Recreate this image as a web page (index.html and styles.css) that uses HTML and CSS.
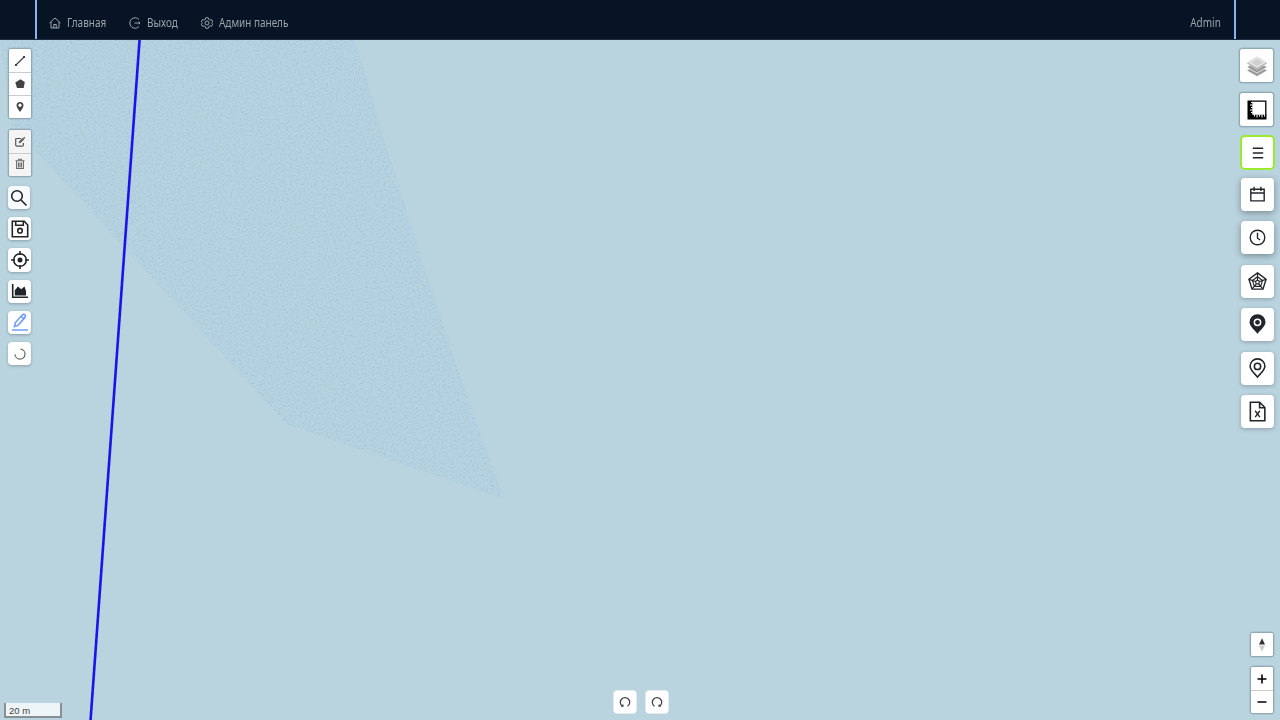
FILE: index.html
```html
<!DOCTYPE html>
<html lang="ru">
<head>
<meta charset="utf-8">
<title>Карта</title>
<link rel="stylesheet" href="styles.css">
</head>
<body>
<header class="header">
  <nav class="nav">
    <a class="nav-item home"><svg width="12" height="12" viewBox="0 0 24 24"><path d="M1 12 12 2l11 10M4 10v12h16V10M9.500 22v-7h5v7"/></svg><span class="label">Главная</span></a>
    <a class="nav-item exit"><svg width="12" height="12" viewBox="0 0 24 24"><path d="M20 5a10.500 10.500 0 1 0 0 14M11 12h11M19.500 9.500 22 12l-2.500 2.500"/></svg><span class="label">Выход</span></a>
    <a class="nav-item admin"><svg width="12" height="12" viewBox="0 0 24 24"><path d="M9.500 1.500h5l1 3.300 2.400 1.400 3.300-.8 2.300 4.300-2.400 2.300 2.400 2.300-2.300 4.300-3.300-.8-2.400 1.400-1 3.300h-5l-1-3.300-2.400-1.400-3.300.8L.5 14.300 2.900 12 .5 9.700l2.300-4.300 3.300.8 2.400-1.400z"/><circle cx="12" cy="12" r="4"/></svg><span class="label">Админ панель</span></a>
    <span class="user">Admin</span>
  </nav>
</header>
<main class="map">
  <svg class="map-canvas" width="1280" height="680" viewBox="0 40 1280 680">
    <defs>
      <filter id="grain" x="0" y="0" width="100%" height="100%" color-interpolation-filters="sRGB">
        <feTurbulence type="fractalNoise" baseFrequency=".52" numOctaves="2" seed="4"/>
        <feColorMatrix values="0 0 0 0 .62  0 0 0 0 .76  0 0 0 0 .86  2.400 0 0 0 -1.08"/>
        <feComposite in2="SourceGraphic" operator="in"/>
      </filter>
    </defs>
    <path d="M0 40 12 125 286 424 504 499Q421 270 355 40Z" fill="#b7d3df"/>
    <path d="M0 40 12 125 286 424 504 499Q421 270 355 40Z" filter="url(#grain)" opacity=".8"/>
    <path d="M139.700 38 90.500 721" stroke="#1c12ee" stroke-width="2.600"/>
  </svg>

  <div class="left-tools">
    <div class="bar draw">
      <button><svg width="12" height="12" viewBox="0 0 12 12"><path d="M2 10 10 2" stroke="#444" stroke-width="1.200"/><path d="M1 9h2v2H1zM9 1h2v2H9z" fill="#444"/></svg></button>
      <button><svg width="12" height="12" viewBox="0 0 12 12"><path d="m6.400 1.200 4.400 2.900-1.100 6H3L1.300 4.500z" fill="#444"/></svg></button>
      <button><svg width="12" height="12" viewBox="0 0 12 12"><path fill-rule="evenodd" d="M6 11C4.800 8.900 2.500 6.500 2.500 4.500a3.500 3.500 0 0 1 7 0C9.500 6.500 7.200 8.900 6 11zM6 2.600a1.700 1.700 0 1 0 0 3.400 1.700 1.700 0 0 0 0-3.400z" fill="#444"/></svg></button>
    </div>
    <div class="bar edit">
      <button><svg width="12" height="12" viewBox="0 0 12 12" fill="none" stroke="#555" stroke-width="1.200"><path d="M7 2.500H2.800Q1.700 2.500 1.700 3.600V9q0 1.200 1.100 1.200h5.500q1.100 0 1.100-1.200V7"/><path d="m5 7 .3-1.500L9 1.800l1.300 1.300-3.700 3.600z" fill="#555" stroke-width=".4"/><path d="m10 1.200.9.900"/></svg></button>
      <button><svg width="12" height="12" viewBox="0 0 12 12" fill="none" stroke="#6c6c6c" stroke-width="1.100"><path d="M1.500 2.800h9M4.500 2.500V1.300h3v1.200M2.600 3v7.500h6.800V3M4.500 4.500v5M6 4.500v5M7.500 4.500v5"/></svg></button>
    </div>
    <div class="small-buttons">
      <button class="small pale"><svg width="18" height="18" viewBox="0 0 18 18"><circle cx="7" cy="7" r="5.300"/><path d="m11 11 5.500 5.500"/></svg></button>
      <button class="small"><svg width="18" height="18" viewBox="0 0 18 18"><path d="M1.300 1.300h12L16.700 5v11.700H1.300zM4.700 1.300v4h7.600v-4"/><circle cx="9" cy="10.700" r="2.300"/></svg></button>
      <button class="small"><svg width="18" height="18" viewBox="0 0 18 18"><circle cx="9" cy="9" r="6.300"/><circle cx="9" cy="9" r="2.500" fill="#20252a" stroke="none"/><path d="M9 0v4M9 14v4M0 9h4M14 9h4"/></svg></button>
      <button class="small"><svg width="18" height="18" viewBox="0 0 18 18"><path d="M1.700 2v13.300H17"/><path d="M3.800 13.600V8.200L7 4.500l3.200 2.700 3.300-2.600L15 9v4.600z" fill="#20252a" stroke="none"/></svg></button>
      <button class="small pencil"><svg width="18" height="18" viewBox="0 0 18 18"><path d="M1 17h16M3.500 13.500l.8-3.700 7-8q1.400-1 2.500.1t.2 2.500l-7 8zM10 3.500l2.700 2.200"/></svg></button>
      <button class="small"><svg width="18" height="18" viewBox="0 0 18 18"><path d="M9.500 4.100A5 5 0 1 1 4 9.200" stroke="#666" stroke-width="1.200"/></svg></button>
    </div>
  </div>

  <div class="right-tools">
    <button class="framed"><svg width="22" height="22" viewBox="0 0 22 22"><path d="m.7 15.500 10.300-6 10.300 6-10.300 6z" fill="#999" stroke="#fff" stroke-width=".6"/><path d="m.7 12 10.300-6 10.300 6-10.300 6z" fill="#999" stroke="#fff" stroke-width=".7"/><path d="m.7 8.200 10.300-6.500 10.300 6.500L11 14.500z" fill="#999" stroke="#fff" stroke-width=".5"/><path d="M1 7.300 11 1.200l10 6.100-10 5.900z" fill="#e2e2e2"/><path d="m5 7.600 6-3.500 6 3.500-6 3.500z" fill="#d0d0d0"/></svg></button>
    <button class="framed"><svg width="20" height="20" viewBox="0 0 20 20"><path d="M.5.500h4.800v14.200h14.200v4.800H.5z" fill="#000"/><path d="M5.300 1.200h13.500V15" fill="none" stroke="#000" stroke-width="1.300"/><path d="M5.500 2.500H4M5.500 5H3M5.500 7.500H4M5.500 10H3M5.500 12.500H4M7.500 14.500v2M10 14.500v3M12.500 14.500v2M15 14.500v3M17.500 14.500v2" stroke="#fff" stroke-width="1"/></svg></button>
    <button class="card active"><svg width="12" height="12" viewBox="0 0 12 12"><path d="M.8 1.300h10.400M.8 6h10.400M.8 10.700h10.400"/></svg></button>
    <button class="card deep"><svg width="17" height="17" viewBox="0 0 16 16"><path d="M1.700 3h12.600v11H1.700zM1.700 6.600h12.600M4.800.8v4M11.200.8v4"/></svg></button>
    <button class="card deep"><svg width="19" height="19" viewBox="0 0 18 18"><circle cx="9" cy="9" r="6.900"/><path d="M9 4.500v5.200l2.500 1.700"/></svg></button>
    <button class="card web"><svg width="21" height="21" viewBox="0 0 20 20"><path d="m10 1.800 8.200 6.100-3 9.300H4.800l-3-9.300z"/><path d="m10 5.500 4.800 3.600-1.800 5.500H7L5.200 9.100zM10 8.600l1.900 1.400-.7 2.300H8.800L8.100 10zM10 2v6.600M18 8l-6.100 2M2 8l6.100 2M15 17l-3.800-4.700M5 17l3.800-4.700" stroke-width="1.100"/></svg></button>
    <button class="card"><svg width="21" height="21" viewBox="0 0 20 20"><path d="M10 18.800C7.500 15.500 2.400 11.600 2.400 7.800a7.600 7.600 0 0 1 15.200 0c0 3.800-5.100 7.700-7.600 11z" fill="#20252a" stroke="none"/><circle cx="10" cy="7.900" r="3" stroke="#fff" stroke-width="1.400"/></svg></button>
    <button class="card"><svg width="21" height="21" viewBox="0 0 20 20"><path d="M10 18.200C7.700 15.200 3 11.500 3 7.800a7 7 0 0 1 14 0c0 3.700-4.700 7.400-7 10.400z"/><circle cx="10" cy="8" r="3"/></svg></button>
    <button class="card"><svg width="21" height="21" viewBox="0 0 20 20"><path d="M3.200 1.200h8.900l4.900 5v12.600H3.200zM12 1.200v5.200h5"/><path d="m7.800 9.300 4.400 6M12.200 9.300l-4.400 6" stroke-width="1.300"/></svg></button>
  </div>

  <div class="zoom-tools">
    <div class="bar compass"><button><svg width="8" height="14" viewBox="0 0 8 14"><path d="m4 .3 3 6.200H1z" fill="#333"/><path d="M1 7.500h6l-3 6z" fill="#ccc"/></svg></button></div>
    <div class="bar zoom">
      <button><svg width="10" height="10" viewBox="0 0 10 10"><path d="M5 .5v9M.5 5h9" stroke="#000" stroke-width="1.600"/></svg></button>
      <button><svg width="10" height="10" viewBox="0 0 10 10"><path d="M.5 5h9" stroke="#000" stroke-width="1.600"/></svg></button>
    </div>
  </div>

  <div class="history">
    <button class="rotate"><svg width="12" height="12" viewBox="0 0 12 12"><path d="M3.500 10.300a4.700 4.700 0 1 1 5 0"/><path d="M2 10.100h1.900V8.500"/></svg></button>
    <button class="rotate"><svg width="12" height="12" viewBox="0 0 12 12"><path d="M3.500 10.300a4.700 4.700 0 1 1 5 0"/><path d="M10 10.100H8.100V8.500"/></svg></button>
  </div>
  <div class="scale">20 m</div>
</main>
</body>
</html>
```
FILE: styles.css
```css
* { box-sizing: border-box; }
body { margin: 0; overflow: hidden; font-family: "Noto Sans", sans-serif; }
button { display: flex; align-items: center; justify-content: center; padding: 0; border: 0; background: #fff; }
svg { display: block; flex: none; }

.header { height: 40px; padding: 0 44px 0 35px; background: #061426; border-bottom: 1px solid #1c2b3d; }
.nav { display: flex; height: 39px; padding: 7px 13px 0 12px; border-left: 2px solid #8bb1ef; border-right: 2px solid #8bb1ef; align-items: center; font-size: 12px; line-height: 16px; color: #9da3ab; }
.nav-item { display: flex; align-items: center; gap: 6px; white-space: nowrap; }
.nav-item svg { fill: none; stroke: #9da3ab; stroke-width: 2; }
.home { width: 80px; }
.exit { width: 72px; }
.label { transform: scaleX(.83); transform-origin: left center; }
.user { margin-left: auto; transform: scaleX(.83); transform-origin: right center; }

.map { position: relative; height: 680px; background: #b9d3df; }
.left-tools { position: absolute; left: 8px; top: 8px; width: 25px; }
.bar { width: 24px; border: 1px solid #8fa9b6; border-radius: 3px; overflow: hidden; background: #fff; box-shadow: 0 0 0 .5px #9db6c2; }
.bar button { width: 100%; height: 23px; }
.bar button + button { border-top: 1px solid #ccc; }
.draw { height: 71px; }
.edit { height: 48px; margin-top: 10px; background: #f4f4f4; }
.edit button { background: #f4f4f4; }
.edit button + button { padding-bottom: 3px; }
.small-buttons { display: flex; flex-direction: column; gap: 8px; margin-top: 9px; }
.small { width: 23px; height: 23.2px; border-radius: 4px; box-shadow: 0 1px 3px rgba(0,0,0,.25); }
.small.pale { background: #f8fbfd; width: 22px; }
.small svg, .card svg { fill: none; stroke: #20252a; }
.small svg { stroke-width: 1.6; }
.small.pencil svg { stroke: #729cff; }

.right-tools { position: absolute; right: 5px; top: 8px; width: 36px; display: flex; flex-direction: column; align-items: flex-end; }
.framed { width: 35px; height: 35px; margin: 0 1px 9px 0; border: 1px solid #8fa9b6; border-radius: 3px; box-shadow: 0 0 0 .5px #9db6c2; }
.framed + .framed { margin-bottom: 9px; }
.card { width: 33px; height: 33px; margin: 0 1px 10.4px 0; border-radius: 4px; box-shadow: 0 1px 4px rgba(0,0,0,.25); }
.card svg { stroke-width: 1.5; }
.card.active { width: 35px; height: 35px; margin: -1px 0 8px; border: 2px solid #9bea2e; border-radius: 5px; box-shadow: none; }
.card.deep { box-shadow: 0 2px 7px rgba(0,0,0,.35); }
.card.deep svg { stroke-width: 1.3; }
.card.web svg { stroke-width: 1.3; }

.zoom-tools { position: absolute; right: 6px; bottom: 6px; display: flex; flex-direction: column; gap: 9px; }
.compass { height: 25px; }
.zoom { height: 48px; }

.history { position: absolute; left: 613px; bottom: 6px; display: flex; gap: 8px; }
.rotate { width: 24px; height: 24px; border: 1px solid #e3ebef; border-radius: 4px; }
.rotate svg { fill: none; stroke: #444; stroke-width: 1.3; }
.scale { position: absolute; left: 4px; bottom: 2px; width: 58px; height: 15px; padding-left: 3px; border: 2px solid #888f93; border-top: 0; background: #eef5f8; font: 9.5px/15px "Liberation Sans", Arial, sans-serif; color: #444; }
```
